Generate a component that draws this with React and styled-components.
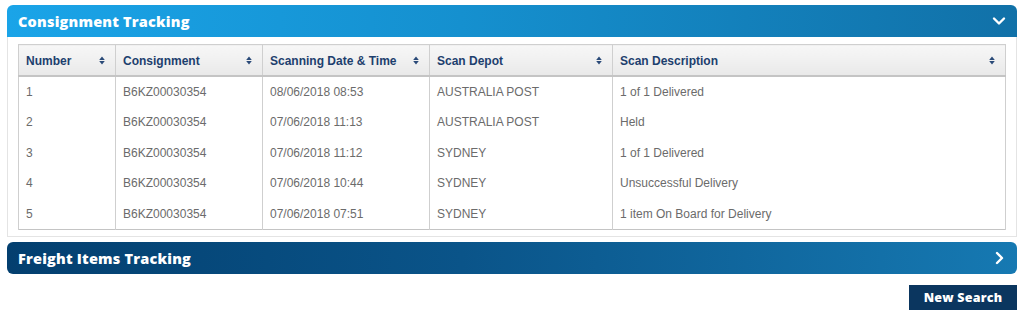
import React from 'react'
import styled, { createGlobalStyle } from 'styled-components'

const GlobalStyle = createGlobalStyle`
    body {
        margin: 0;
        background: #fff;
        font-family: "Liberation Sans", Arial, sans-serif;
    }
`

const COLUMNS = [
    { label: 'Number', width: 97 },
    { label: 'Consignment', width: 147 },
    { label: 'Scanning Date & Time', width: 167 },
    { label: 'Scan Depot', width: 183 },
    { label: 'Scan Description' },
]

const ROWS = [
    ['1', 'B6KZ00030354', '08/06/2018 08:53', 'AUSTRALIA POST', '1 of 1 Delivered'],
    ['2', 'B6KZ00030354', '07/06/2018 11:13', 'AUSTRALIA POST', 'Held'],
    ['3', 'B6KZ00030354', '07/06/2018 11:12', 'SYDNEY', '1 of 1 Delivered'],
    ['4', 'B6KZ00030354', '07/06/2018 10:44', 'SYDNEY', 'Unsuccessful Delivery'],
    ['5', 'B6KZ00030354', '07/06/2018 07:51', 'SYDNEY', '1 item On Board for Delivery'],
]

const SortIcon = () => (
    <svg width="6" height="9" viewBox="0 0 6 9">
        <path d="M3 0.5 L5.8 4 H0.2 Z M3 8.5 L5.8 5 H0.2 Z" fill="#2a4a78" />
    </svg>
)

const Chevron = ({ dir }) => (
    <svg width="14" height="14" viewBox="0 0 14 14">
        {dir === 'down'
            ? <path d="M2 4.5 L7 9.5 L12 4.5" stroke="#fff" strokeWidth="2.4" fill="none" strokeLinecap="round" strokeLinejoin="round" />
            : <path d="M5 2 L10 7 L5 12" stroke="#fff" strokeWidth="2.4" fill="none" strokeLinecap="round" strokeLinejoin="round" />}
    </svg>
)

const App = () => (
    <Page>
        <GlobalStyle />
        <Panel>
            <Bar open>
                <Title>Consignment Tracking</Title>
                <Chevron dir="down" />
            </Bar>
            <Body>
                <Table>
                    <thead>
                        <tr>
                            {COLUMNS.map(col => (
                                <Th key={col.label} $width={col.width}>
                                    <HeadCell>
                                        <span>{col.label}</span>
                                        <SortIcon />
                                    </HeadCell>
                                </Th>
                            ))}
                        </tr>
                    </thead>
                    <tbody>
                        {ROWS.map(row => (
                            <tr key={row[0]}>
                                {row.map((cell, i) => <Td key={i}>{cell}</Td>)}
                            </tr>
                        ))}
                    </tbody>
                </Table>
            </Body>
        </Panel>
        <Bar>
            <Title>Freight Items Tracking</Title>
            <Chevron dir="right" />
        </Bar>
        <Actions>
            <Button>New Search</Button>
        </Actions>
    </Page>
)

export default App

const Page = styled.div`
    padding: 5px 7px;
    display: flex;
    flex-direction: column;
`
const Panel = styled.div`
    display: flex;
    flex-direction: column;
`
const Bar = styled.div`
    height: 32px;
    display: flex;
    align-items: center;
    justify-content: space-between;
    padding: 0 11px 0 11px;
    box-sizing: border-box;
    border-radius: ${p => p.open ? '6px 6px 0 0' : '6px'};
    background: ${p => p.open
        ? 'linear-gradient(to right, #1aa4e8 0%, #1590cf 45%, #1171a8 100%)'
        : 'linear-gradient(to right, #033f6f 0%, #0a5489 45%, #1679b2 100%)'};
    margin-top: ${p => p.open ? '0' : '5px'};
`
const Title = styled.h2`
    margin: 0;
    color: #fff;
    font-family: "Open Sans", "DejaVu Sans", sans-serif;
    font-weight: 800;
    font-size: 14.5px;
    letter-spacing: 0.2px;
`
const Body = styled.div`
    border: 1px solid #e4e4e4;
    border-top: none;
    padding: 7px 10px 6px;
`
const Table = styled.table`
    width: 100%;
    table-layout: fixed;
    border-collapse: collapse;
    border: 1px solid #c4c4c4;
    font-size: 12px;
`
const Th = styled.th`
    box-sizing: border-box;
    width: ${p => p.$width ? p.$width + 'px' : 'auto'};
    height: 31px;
    padding: 2px 10px 0 7px;
    border: 1px solid #cfcfcf;
    border-bottom: 2px solid #c4c4c4;
    background: linear-gradient(to bottom, #f7f7f7, #e9e9e9);
    text-align: left;
    color: #1d3f6e;
    font-weight: bold;
`
const HeadCell = styled.div`
    display: flex;
    align-items: center;
    justify-content: space-between;
`
const Td = styled.td`
    height: 30.5px;
    padding: 0 7px;
    border-left: 1px solid #cfcfcf;
    border-right: 1px solid #cfcfcf;
    color: #6b6b6b;
    vertical-align: middle;
`
const Actions = styled.div`
    display: flex;
    justify-content: flex-end;
    margin-top: 11px;
`
const Button = styled.button`
    width: 108px;
    height: 25px;
    border: none;
    background: #0b365f;
    color: #fff;
    font-family: "Open Sans", "DejaVu Sans", sans-serif;
    font-weight: 800;
    font-size: 12.5px;
    letter-spacing: 0.2px;
    cursor: pointer;
`
